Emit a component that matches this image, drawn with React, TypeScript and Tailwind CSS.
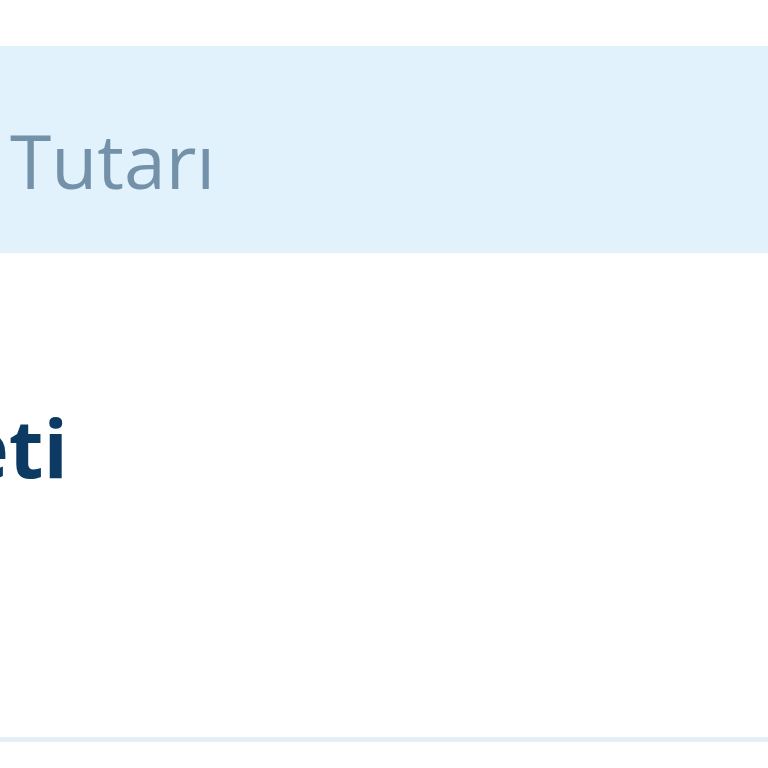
export default function App() {
  return (
    <div className="w-[768px] h-[768px] bg-white overflow-hidden flex flex-col" style={{ fontFamily: '"Open Sans", "Noto Sans", sans-serif' }}>
      <div className="h-[46px]" />
      <div className="h-[207px] bg-[#e1f2fd] flex items-start pt-[77px] pl-[10px]">
        <span className="text-[75px] leading-none text-[#7391a9] whitespace-nowrap">Tutarı</span>
      </div>
      <div className="h-[484px] flex items-start pt-[154px]">
        <div className="w-[68px] flex justify-end">
          <span className="text-[80px] leading-none font-bold text-[#0d3a63] whitespace-nowrap">Hizmeti</span>
        </div>
      </div>
      <div className="h-[5px] bg-[#e6eef5]" />
      <div className="flex-1" />
    </div>
  );
}
